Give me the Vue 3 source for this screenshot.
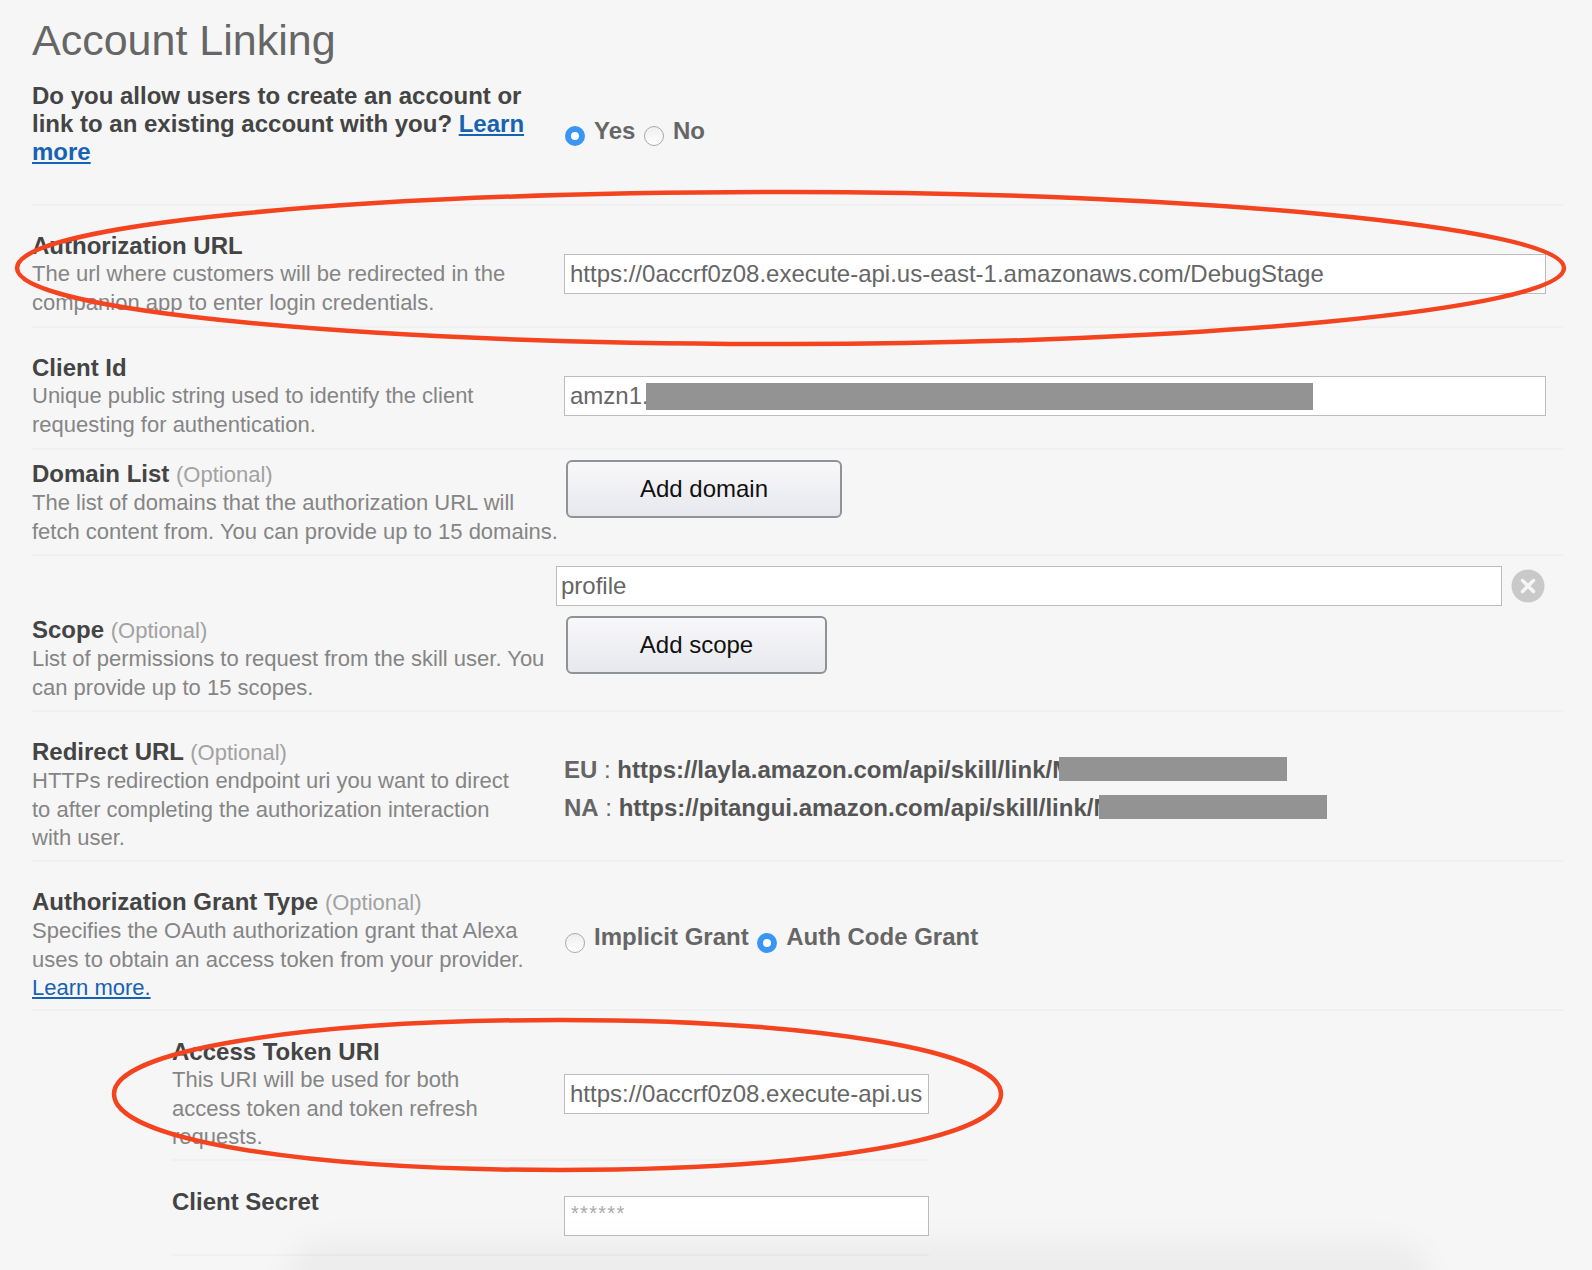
<script setup>
const accessUrl = 'https://0accrf0z08.execute-api.us-east-1.amazonaws.com/DebugStage'
</script>

<template>
  <div class="page">
    <h1 class="title">Account Linking</h1>

    <section class="row row-question">
      <div class="label-col">
        <div class="question">Do you allow users to create an account or<br>link to an existing account with you? <a class="link" href="#">Learn</a><br><a class="link" href="#">more</a></div>
      </div>
      <div class="radios radios-yes">
        <span class="radio on"></span><span class="radio-text">Yes</span>
        <span class="radio"></span><span class="radio-text">No</span>
      </div>
    </section>

    <section class="row row-std">
      <div class="label-col">
        <div class="label">Authorization URL</div>
        <div class="desc">The url where customers will be redirected in the<br>companion app to enter login credentials.</div>
      </div>
      <div class="field-col"><input class="input" readonly :value="accessUrl"></div>
    </section>

    <section class="row row-std">
      <div class="label-col">
        <div class="label">Client Id</div>
        <div class="desc">Unique public string used to identify the client<br>requesting for authentication.</div>
      </div>
      <div class="field-col masked-field">
        <input class="input" readonly value="amzn1.">
        <span class="mask mask-client"></span>
      </div>
    </section>

    <section class="row row-domain">
      <div class="label-col">
        <div class="label">Domain List <span class="optional">(Optional)</span></div>
        <div class="desc">The list of domains that the authorization URL will<br>fetch content from. You can provide up to 15 domains.</div>
      </div>
      <div class="button-col"><button class="btn btn-domain">Add domain</button></div>
    </section>

    <section class="row row-scope">
      <div class="label-col">
        <div class="label">Scope <span class="optional">(Optional)</span></div>
        <div class="desc">List of permissions to request from the skill user. You<br>can provide up to 15 scopes.</div>
      </div>
      <div class="scope-col">
        <div class="scope-line">
          <input class="input scope-input" readonly value="profile">
          <svg class="clear" viewBox="0 0 34 34" width="34" height="34">
            <circle cx="17" cy="17" r="16.5" fill="#c9c9c9" />
            <path d="M11.5 11.5 22.5 22.5M22.5 11.5 11.5 22.5" stroke="#f6f6f6" stroke-width="3.5" stroke-linecap="round" />
          </svg>
        </div>
        <button class="btn btn-scope">Add scope</button>
      </div>
    </section>

    <section class="row row-redirect">
      <div class="label-col">
        <div class="label">Redirect URL <span class="optional">(Optional)</span></div>
        <div class="desc">HTTPs redirection endpoint uri you want to direct<br>to after completing the authorization interaction<br>with user.</div>
      </div>
      <div class="redirects">
        <div class="redirect-line"><b class="region">EU</b> : <b class="url">https://layla.amazon.com/api/skill/link/M</b><span class="mask mask-eu"></span></div>
        <div class="redirect-line"><b class="region">NA</b> : <b class="url">https://pitangui.amazon.com/api/skill/link/M</b><span class="mask mask-na"></span></div>
      </div>
    </section>

    <section class="row row-grant">
      <div class="label-col">
        <div class="label">Authorization Grant Type <span class="optional">(Optional)</span></div>
        <div class="desc">Specifies the OAuth authorization grant that Alexa<br>uses to obtain an access token from your provider.<br><a class="link-plain" href="#">Learn more.</a></div>
      </div>
      <div class="radios radios-grant">
        <span class="radio"></span><span class="radio-text">Implicit Grant</span>
        <span class="radio on"></span><span class="radio-text">Auth Code Grant</span>
      </div>
    </section>

    <div class="sub">
      <section class="row row-token">
        <div class="label-col sub-label">
          <div class="label">Access Token URI</div>
          <div class="desc">This URI will be used for both<br>access token and token refresh<br>requests.</div>
        </div>
        <div class="field-col"><input class="input" readonly :value="accessUrl"></div>
      </section>
      <section class="row row-secret">
        <div class="label-col sub-label">
          <div class="label">Client Secret</div>
        </div>
        <div class="field-col"><div class="input secret">******</div></div>
      </section>
    </div>

    <div class="shade"></div>

    <svg class="marks" viewBox="0 0 1592 1270" width="1592" height="1270">
      <path d="M790 192C1180 192 1564 226 1564 268C1564 310 1190 344 790 344C370 344 17 312 17 268C17 226 340 192 790 192Z" />
      <path d="M560 1020C810 1020 1001 1050 1001 1094C1001 1140 810 1170 560 1170C305 1170 114 1140 114 1094C114 1050 305 1020 560 1020Z" />
    </svg>
  </div>
</template>

<style>
html, body { margin: 0; background: #f6f6f6; }
</style>

<style scoped>
.page {
  position: relative;
  width: 1592px;
  height: 1270px;
  overflow: hidden;
  box-sizing: border-box;
  padding: 0 29px 0 32px;
  background: #f6f6f6;
  font-family: "Liberation Sans", Arial, sans-serif;
  color: #666;
}
.title {
  margin: 0;
  padding-top: 15px;
  height: 66px;
  box-sizing: border-box;
  font-size: 43px;
  line-height: 50px;
  font-weight: 400;
  color: #666;
}
.row {
  display: grid;
  grid-template-columns: 532px 1fr;
  border-bottom: 2px solid #f0f0f0;
  box-sizing: border-box;
}
.row-question { height: 140px; padding-top: 16px; }
.row-std { height: 122px; padding-top: 26px; }
.row-domain { height: 106px; padding-top: 10px; }
.row-scope { height: 156px; padding-top: 10px; grid-template-columns: 524px 1fr; }
.row-redirect { height: 150px; padding-top: 26px; }
.row-grant { height: 149px; padding-top: 26px; }
.row-token { height: 150px; padding-top: 27px; grid-template-columns: 392px 1fr; }
.row-secret { height: 95px; padding-top: 27px; grid-template-columns: 392px 1fr; }
.question, .label {
  font-weight: 700;
  font-size: 24px;
  line-height: 28.4px;
  color: #444;
  white-space: nowrap;
}
.question { line-height: 28px; }
.desc {
  font-size: 22px;
  line-height: 28.4px;
  color: #858585;
  white-space: nowrap;
}
.optional { font-weight: 400; font-size: 22px; color: #a2a2a2; }
.link, .link-plain { color: #1763b3; text-decoration: underline; }
.row-scope .label-col { padding-top: 50px; }
.field-col { padding-top: 22px; position: relative; }
.row-token .field-col { padding-top: 36px; }
.row-secret .field-col { padding-top: 8px; }
.input {
  display: block;
  box-sizing: border-box;
  width: 100%;
  height: 40px;
  margin: 0;
  padding: 0 5px;
  border: 1px solid #bcbcbc;
  border-radius: 0;
  background: #fff;
  font-family: inherit;
  font-size: 24px;
  color: #666;
  outline: none;
}
.row-std .input { width: 982px; }
.secret { font-size: 20px; color: #aaa; line-height: 32px; padding-left: 6px; letter-spacing: 1.3px; }
.masked-field { position: relative; }
.mask { position: absolute; background: #939393; display: block; }
.mask-client { left: 82px; top: 29px; width: 667px; height: 27px; }
.button-col { padding-left: 2px; }
.btn {
  display: block;
  box-sizing: border-box;
  height: 58px;
  border: 2px solid #8f9296;
  border-radius: 6px;
  background: linear-gradient(#f8f8fa, #e7e8ed);
  font-family: inherit;
  font-size: 24px;
  color: #111;
  padding: 0;
}
.btn-domain { width: 276px; }
.btn-scope { width: 261px; margin: 10px 0 0 10px; }
.scope-line { display: flex; align-items: center; }
.scope-input { width: 946px; padding-left: 4px; }
.clear { margin-left: 9px; flex: none; }
.redirects { padding-top: 13px; position: relative; font-size: 24px; line-height: 37.5px; color: #666; white-space: nowrap; }
.redirect-line { position: relative; }
.region { font-weight: 700; color: #666; }
.url { font-weight: 700; color: #555; }
.mask-eu { left: 495px; width: 228px; height: 24px; }
.mask-na { left: 535px; width: 228px; height: 24px; }
.redirect-line .mask { top: 6px; }
.radios { display: flex; align-items: center; font-size: 24px; font-weight: 700; color: #666; height: 30px; padding-left: 1px; }
.radios-yes { margin-top: 34px; }
.radios-grant { margin-top: 34px; }
.radio {
  display: block;
  box-sizing: border-box;
  flex: none;
  width: 20px;
  height: 20px;
  border: 1px solid #a9a9a9;
  border-radius: 50%;
  background: linear-gradient(#eee, #fff);
}
.radios-yes .radio { margin-top: 10px; }
.radios-grant .radio { margin-top: 12px; }
.radio.on {
  border: 6px solid #3a95f5;
  background: #fff;
}
.radio-text { margin: 0 8.5px 0 9px; }
.sub { margin-left: 140px; width: 757px; }
.shade {
  position: absolute;
  left: 285px;
  right: 160px;
  top: 1240px;
  height: 80px;
  border-radius: 50px;
  background: rgba(0, 0, 0, 0.035);
  filter: blur(12px);
  pointer-events: none;
}
.marks { position: absolute; left: 0; top: 0; pointer-events: none; }
.marks path { fill: none; stroke: #f4431f; stroke-width: 4.5; }
</style>
